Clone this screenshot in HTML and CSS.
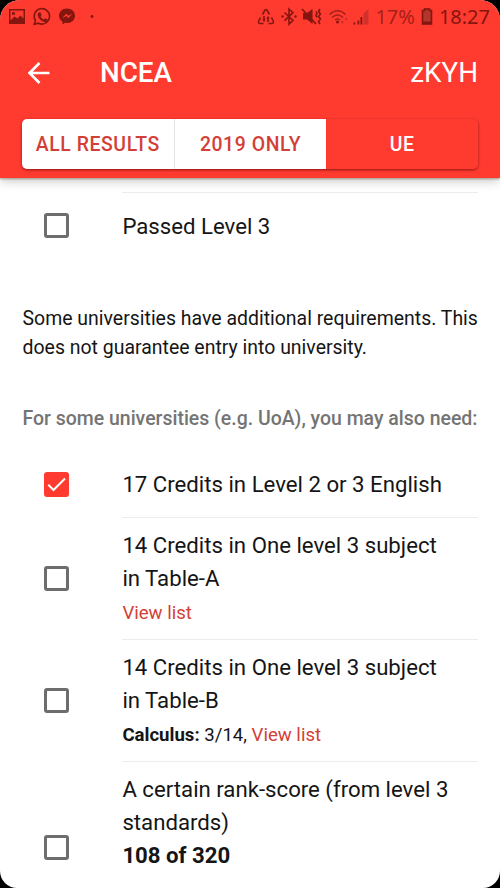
FILE: index.html
```html
<!DOCTYPE html>
<html lang="en">
<head>
    <meta charset="UTF-8">
    <meta name="viewport" content="width=device-width, initial-scale=1.0">
    <title>NCEA</title>
    <link rel="stylesheet" href="styles.css">
</head>
<body>
    <div class="screen">
        <header class="header">
            <div class="statusbar">
                <svg class="status-left" width="110" height="34" viewBox="0 0 110 34">
                    <path fill-rule="evenodd" d="M9 9h16v15H9zM10.500 10.500v10l4-4 3 2 3-3 3 3v-8zM12 12.200h3v2.600h-3z"/>
                    <g class="line">
                        <path d="M34.300 24.300l1.100-3.800a7.700 7.700 0 1 1 3 2.700z"/>
                    </g>
                    <path d="M38.700 12.500l1.700-.3 1.200 2.900-1 1.300c.8 1.500 1.800 2.400 3.200 3.100l1.200-1.200 2.700 1.300c0 2-1.600 2.800-3.200 2.400-3.600-.8-6.400-3.700-6.800-6.900-.1-1 .4-2 1-2.600z"/>
                    <path fill-rule="evenodd" d="M67 8.500c4.600 0 8 3.200 8 7.300s-3.400 7.300-8 7.300l-2-.3-2.500 1.600v-2.800c-2.200-1.300-3.500-3.400-3.500-5.800 0-4.100 3.400-7.300 8-7.300zM62 18.300l4.300-2.200 2.200 2 4-4.500-4 2.200-2.200-2z"/>
                    <circle cx="92" cy="16.500" r="1.400"/>
                </svg>
                <div class="status-right">
                    <svg width="112" height="34" viewBox="0 0 112 34">
                        <!-- data saver -->
                        <g class="line">
                            <path d="M3.500 17.500l-1.700 3.500q-1 2.500 1.500 2.500h3.200M5.500 14.500l2.400-4.200q1.100-1.600 2.200 0l2.400 4.200M14.500 17.500l1.700 3.500q1 2.500-1.500 2.500h-3.200M7 16v4M11 18v4"/>
                        </g>
                        <path d="M5.200 19.500h3.600L7 22zM9.200 18.500h3.600L11 16z"/>
                        <!-- bluetooth -->
                        <g class="line">
                            <path d="M27.500 12.500l8.500 8-4 3.700V9l4 3.700-8.500 8"/>
                        </g>
                        <circle cx="25.500" cy="16.500" r="1.200"/>
                        <circle cx="38.500" cy="16.500" r="1.200"/>
                        <!-- muted, vibrate -->
                        <path d="M46 13h4l5.500-4v15L50 19.500h-4z"/>
                        <path class="slash" d="M45 9l14 15"/>
                        <path class="line" d="M63 9l-1.500 2.500 2 2.500-2 2.500 2 2.500-2 2.500 1.500 2.500M59 11.500l1 2-1 2 1 2"/>
                        <!-- wifi -->
                        <path class="line wifi" d="M72.500 14.500q8-7.500 16 0M75 17.500q5.500-5 11 0M78 20q2.500-2 5 0"/>
                        <circle cx="80.500" cy="22" r="1.500"/>
                        <path class="faint" d="M83.500 21h3.500l-1.700 3.500zM87.500 20l1.700-3 1.700 3z"/>
                        <!-- signal -->
                        <path d="M96.500 22.500h1.800v2h-1.800zM100.500 20.500h1.800v4h-1.800zM103.500 17h1.800v7.500h-1.800z"/>
                        <path class="faint" d="M106.500 13.500l5-4.500v15.500h-5z"/>
                    </svg>
                    <span class="battery-level">17%</span>
                    <svg class="battery" width="12" height="34" viewBox="0 0 12 34">
                        <path d="M3.500 8.500h5V10H11v14.500H1V10h2.500z" class="charge"/>
                        <path class="line" d="M3.500 9h5v1.500h2v13.500h-9V10.500h2z"/>
                        <path d="M2 21.500h8v2.500H2z"/>
                    </svg>
                    <span class="time">18:27</span>
                </div>
            </div>
            <div class="navbar">
                <svg class="back" width="24" height="24" viewBox="0 0 24 24">
                    <path d="M22.500 12H3M12.500 2L2.500 12l10 10"/>
                </svg>
                <h1>NCEA</h1>
                <span class="user">zKYH</span>
            </div>
            <div class="tabs">
                <a class="tab">All Results</a>
                <a class="tab">2019 Only</a>
                <a class="tab active">UE</a>
            </div>
        </header>

        <main class="content">
            <ul class="list first">
                <li class="item">
                    <span class="checkbox"></span>
                    <div class="inner"><div class="text">Passed Level 3</div></div>
                </li>
            </ul>

            <p class="note">Some universities have additional requirements. This does not guarantee entry into university.</p>

            <h2 class="block-title">For some universities (e.g. UoA), you may also need:</h2>

            <ul class="list">
                <li class="item">
                    <span class="checkbox checked">
                        <svg width="25" height="25" viewBox="0 0 25 25"><path d="M4.300 12.800l5.200 5.200L21 6.500"/></svg>
                    </span>
                    <div class="inner"><div class="text">17 Credits in Level 2 or 3 English</div></div>
                </li>
                <li class="item">
                    <span class="checkbox"></span>
                    <div class="inner">
                        <div class="text">14 Credits in One level 3 subject in Table-A</div>
                        <div class="footer"><a class="link">View list</a></div>
                    </div>
                </li>
                <li class="item">
                    <span class="checkbox"></span>
                    <div class="inner">
                        <div class="text">14 Credits in One level 3 subject in Table-B</div>
                        <div class="footer"><b>Calculus:</b> 3/14, <a class="link">View list</a></div>
                    </div>
                </li>
                <li class="item tall">
                    <span class="checkbox"></span>
                    <div class="inner">
                        <div class="text">A certain rank-score (from level 3 standards)</div>
                        <div class="score">108 of 320</div>
                    </div>
                </li>
            </ul>
        </main>
    </div>
</body>
</html>
```

FILE: styles.css
```css
* {
    box-sizing: border-box;
}
body {
    margin: 0;
    background: #000;
    font-family: Roboto, sans-serif;
    color: #151515;
}
h1, h2, p, ul {
    margin: 0;
    padding: 0;
}
.screen {
    height: 888px;
    overflow: hidden;
    border-radius: 20px 20px 17px 17px;
    background: #fff;
    display: flex;
    flex-direction: column;
}

/* header */
.header {
    flex: none;
    height: 178px;
    background: #ff3b30;
    box-shadow: 0 1px 2px rgba(70,50,10,0.4), 0 3px 10px rgba(0,0,0,0.22);
}
.statusbar {
    height: 34px;
    display: flex;
    justify-content: space-between;
    padding-right: 10px;
    fill: #85150f;
    color: #85150f;
}
.statusbar .line {
    fill: none;
    stroke: #85150f;
    stroke-width: 1.6;
}
.statusbar .wifi {
    stroke: #a82019;
}
.statusbar .slash {
    stroke: #85150f;
    stroke-width: 1.8;
}
.statusbar .faint {
    fill: #d2302a;
}
.statusbar .charge {
    fill: #b3352c;
}
.status-right {
    display: flex;
    font: 20px/34px "Noto Sans", sans-serif;
}
.battery-level {
    margin-left: 6px;
    color: #a82019;
}
.battery {
    margin: 0 6px;
}
.navbar {
    height: 77px;
    display: flex;
    align-items: center;
    padding: 0 22px 0 27px;
    color: #fff;
}
.back {
    fill: none;
    stroke: #fff;
    stroke-width: 2.6;
}
.navbar h1 {
    margin-left: 49px;
    font-size: 27.8px;
    font-weight: 500;
}
.user {
    margin-left: auto;
    font-size: 27.8px;
}
.tabs {
    display: flex;
    height: 50px;
    margin: 8px 22px 0;
    border-radius: 5px;
    overflow: hidden;
    box-shadow: 0 1px 3px rgba(80,0,0,0.65);
}
.tab {
    flex: 1;
    background: #fff;
    color: #d33f37;
    font-size: 19.4px;
    font-weight: 500;
    line-height: 51px;
    letter-spacing: 0.58px;
    text-align: center;
    text-transform: uppercase;
}
.tab + .tab {
    border-left: 1px solid #e4e4e4;
}
.tab.active {
    background: #ff3b30;
    color: #fff;
    border-left: 0;
}

/* content */
.content {
    padding: 0 22px;
}
.list {
    list-style: none;
}
.list.first {
    margin-top: 14px;
}
.list.first .inner {
    border-top: 1px solid #ececec;
}
.item {
    display: flex;
    align-items: center;
    padding-left: 22px;
}
.checkbox {
    flex: none;
    width: 25px;
    height: 25px;
    margin-right: 53.4px;
    border: 3px solid #6d6d6d;
    border-radius: 3px;
}
.checkbox.checked {
    border: 0;
    background: #ff3b30;
}
.checkbox svg {
    display: block;
    fill: none;
    stroke: #fff;
    stroke-width: 2;
}
.inner {
    flex: 1;
    display: flex;
    flex-direction: column;
    justify-content: center;
    min-height: 67px;
    padding: 11px 0 10px;
    font-size: 22.2px;
    line-height: 33.3px;
}
.item:not(:last-child) .inner {
    border-bottom: 1px solid #ececec;
}
.tall .inner {
    justify-content: flex-start;
    height: 172px;
}
.text {
    padding-right: 22px;
}
.footer {
    height: 33.4px;
    padding-top: 1.5px;
    font-size: 18.6px;
}
.link {
    color: #d33f37;
}
.score {
    font-weight: 700;
}
.note {
    margin-top: 45px;
    margin-right: -2px;
    padding-left: 0.5px;
    font-size: 19.47px;
    line-height: 29.2px;
}
.block-title {
    margin-top: 45.500px;
    margin-bottom: 21px;
    padding-left: 0.5px;
    font-size: 19.47px;
    font-weight: 500;
    line-height: 22px;
    color: #747474;
    white-space: nowrap;
}
```
